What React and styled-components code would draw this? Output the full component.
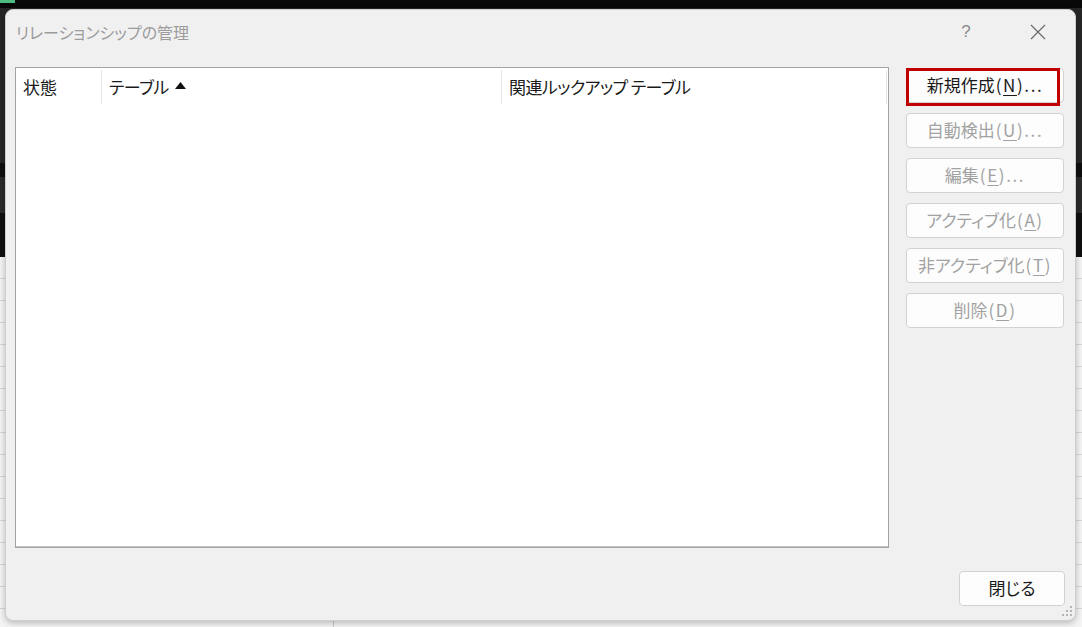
import styled, { createGlobalStyle } from "styled-components";

const GlobalStyle = createGlobalStyle`
  html, body {
    margin: 0;
    padding: 0;
  }
  body {
    width: 1082px;
    height: 627px;
    overflow: hidden;
    font-family: "Noto Sans CJK JP", "Noto Sans", sans-serif;
    font-feature-settings: "palt";
    background:
      linear-gradient(#4cbb7f, #4cbb7f) 0 0 / 15px 3px no-repeat,
      linear-gradient(#c9c9c9, #c9c9c9) 333px 257px / 1px 370px no-repeat,
      repeating-linear-gradient(
        to bottom,
        transparent 0,
        transparent 21px,
        #d6d6d6 21px,
        #d6d6d6 22px
      ) 0 257px / 100% 370px no-repeat,
      linear-gradient(
        to bottom,
        #080808 0,
        #080808 8px,
        #262626 8px,
        #262626 163px,
        #0e0e0e 163px,
        #0e0e0e 177px,
        #2a2a2a 177px,
        #2a2a2a 213px,
        #0f0f0f 213px,
        #0f0f0f 257px,
        #f4f4f4 257px
      );
  }
`;

const Page = styled.div`
  box-sizing: border-box;
  width: 1082px;
  height: 627px;
  padding: 9px 0 0 5px;
`;

const Dialog = styled.div`
  position: relative;
  box-sizing: border-box;
  width: 1071px;
  height: 612px;
  background: #f0f0f0;
  border: 1px solid #cfcfcf;
  border-radius: 8px;
  box-shadow: 0 2px 6px rgba(0, 0, 0, 0.25);
  display: flex;
  flex-direction: column;
`;

const TitleBar = styled.div`
  height: 44px;
  display: flex;
  align-items: center;
  padding: 0 1px 0 10px;
`;

const Title = styled.div`
  flex: 1;
  font-size: 16px;
  color: #9c9c9c;
  padding-bottom: 1px;
`;

const TitleButton = styled.div`
  width: 72px;
  height: 44px;
  display: flex;
  align-items: center;
  justify-content: center;
  color: #8a8a8a;
  font-family: "Liberation Sans", "Noto Sans", sans-serif;
  font-size: 17px;
`;

const Main = styled.div`
  display: flex;
  align-items: flex-start;
  padding: 13px 10px 0 9px;
`;

const ListBox = styled.div`
  box-sizing: border-box;
  width: 874px;
  height: 481px;
  background: #ffffff;
  border: 1px solid #a3a3a3;
  box-shadow: inset 0 -1px 0 #c4c4cc;
`;

const HeaderRow = styled.div`
  display: flex;
  height: 38px;
  padding-top: 2px;
`;

const HeaderCell = styled.div`
  box-sizing: border-box;
  width: ${(p) => p.$width}px;
  height: 34px;
  display: flex;
  align-items: center;
  gap: 6px;
  padding-left: 7px;
  padding-bottom: 1px;
  font-size: 17px;
  color: #1a1a1a;
  border-right: 1px solid #e6e6e6;
`;

const Kana = styled.span`
  letter-spacing: -0.6px;
`;

const SortArrow = styled.svg`
  width: 11px;
  height: 7px;
  margin-top: -2px;
`;

const ButtonColumn = styled.div`
  display: flex;
  flex-direction: column;
  gap: 10px;
  margin-left: 17px;
  padding-top: 1px;
`;

const ActionButton = styled.button`
  position: relative;
  box-sizing: border-box;
  width: ${(p) => p.$width || 158}px;
  height: 35px;
  padding: 0 0 2px;
  background: #fdfdfd;
  border: 1px solid #d2d2d2;
  border-radius: 4px;
  font-family: inherit;
  font-feature-settings: "palt";
  font-size: 17px;
  color: ${(p) => (p.disabled ? "#a2a2a2" : "#1a1a1a")};
  display: flex;
  align-items: center;
  justify-content: center;

  u {
    text-underline-offset: 3px;
  }
`;

const Mnemonic = styled.span`
  font-feature-settings: normal;
  letter-spacing: 1.6px;
  margin-left: 1px;
`;

const Highlight = styled.span`
  position: absolute;
  left: -1px;
  top: -1px;
  right: 3px;
  bottom: -4px;
  border: 3px solid #c00000;
  pointer-events: none;
`;

const Footer = styled.div`
  display: flex;
  justify-content: flex-end;
  padding: 23px 10px 0 0;
`;

const Grip = styled.svg`
  position: absolute;
  right: 2px;
  bottom: 2px;
  width: 14px;
  height: 14px;
`;

const actions = [
  { label: "新規作成", key: "N", dots: true, enabled: true },
  { label: "自動検出", key: "U", dots: true },
  { label: "編集", key: "E", dots: true },
  { label: "アクティブ化", key: "A" },
  { label: "非アクティブ化", key: "T" },
  { label: "削除", key: "D" },
];

export default function App() {
  return (
    <Page>
      <GlobalStyle />
      <Dialog>
        <TitleBar>
          <Title>リレーションシップの管理</Title>
          <TitleButton>?</TitleButton>
          <TitleButton>
            <svg width="16" height="16" viewBox="0 0 16 16">
              <path d="M1 1 L15 15 M15 1 L1 15" stroke="#6a6a6a" strokeWidth="1.2" />
            </svg>
          </TitleButton>
        </TitleBar>
        <Main>
          <ListBox>
            <HeaderRow>
              <HeaderCell $width={86}>状態</HeaderCell>
              <HeaderCell $width={400}>
                <Kana>テーブル</Kana>
                <SortArrow viewBox="0 0 11 7">
                  <path d="M0 7 L5.5 0 L11 7 Z" fill="#111" />
                </SortArrow>
              </HeaderCell>
              <HeaderCell $width={385}>
                <Kana>関連ルックアップ テーブル</Kana>
              </HeaderCell>
            </HeaderRow>
          </ListBox>
          <ButtonColumn>
            {actions.map((a) => (
              <ActionButton key={a.key} disabled={!a.enabled}>
                {a.label}
                <Mnemonic>
                  (<u>{a.key}</u>){a.dots ? "..." : ""}
                </Mnemonic>
                {a.enabled && <Highlight />}
              </ActionButton>
            ))}
          </ButtonColumn>
        </Main>
        <Footer>
          <ActionButton $width={106}>閉じる</ActionButton>
        </Footer>
        <Grip viewBox="0 0 14 14">
          <g fill="#b4b4b4">
            <rect x="11" y="2" width="2" height="2" />
            <rect x="7" y="6" width="2" height="2" />
            <rect x="11" y="6" width="2" height="2" />
            <rect x="3" y="10" width="2" height="2" />
            <rect x="7" y="10" width="2" height="2" />
            <rect x="11" y="10" width="2" height="2" />
          </g>
        </Grip>
      </Dialog>
    </Page>
  );
}
